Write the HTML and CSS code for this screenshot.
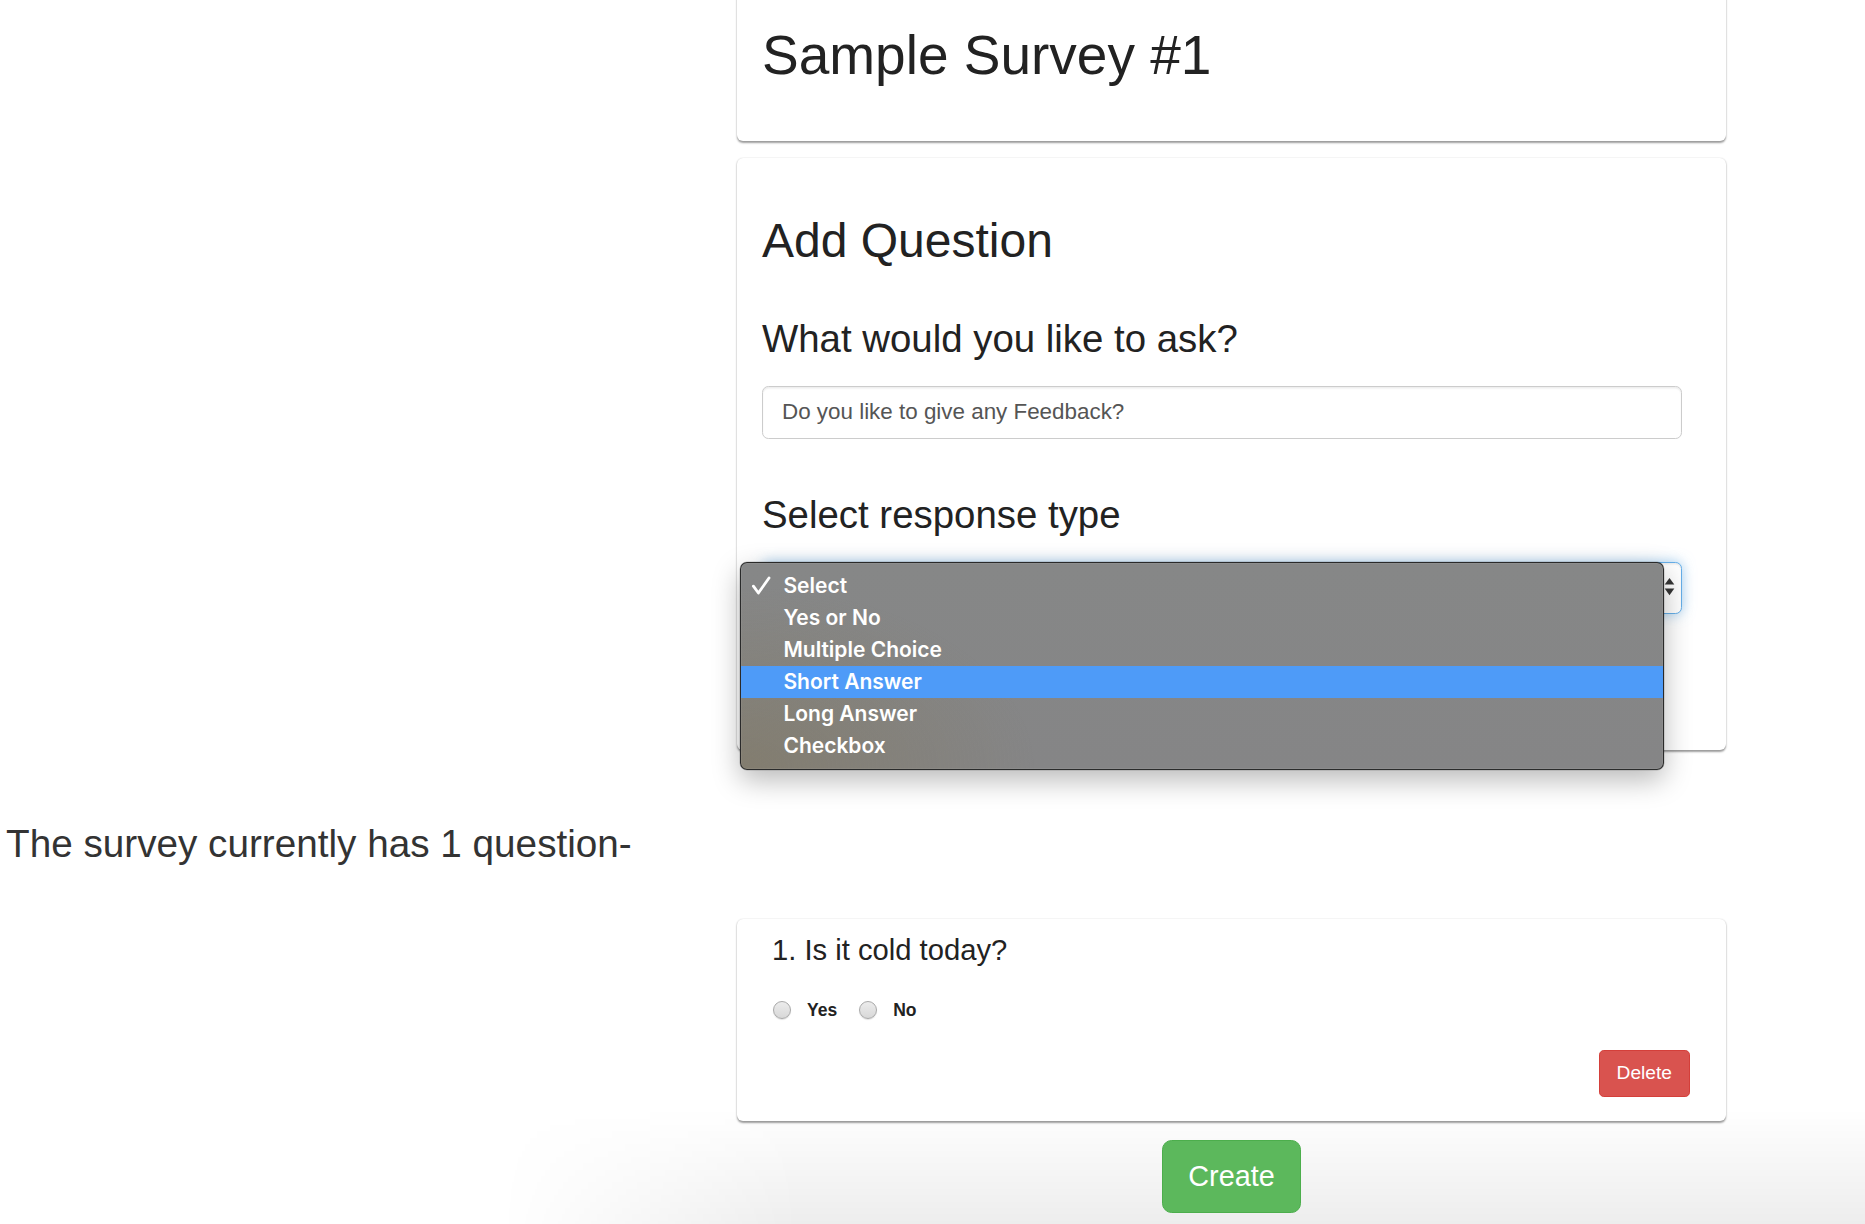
FILE: index.html
```html
<!DOCTYPE html>
<html lang="en">
<head>
<meta charset="utf-8">
<title>Sample Survey #1</title>
<link rel="stylesheet" href="styles.css">
</head>
<body>
<div class="page">
  <div class="col">
    <section class="card card-title">
      <h1>Sample Survey #1</h1>
    </section>
    <section class="card card-add">
      <h2>Add Question</h2>
      <h3 class="field-label">What would you like to ask?</h3>
      <input class="text-input" type="text" value="Do you like to give any Feedback?">
      <h3 class="field-label field-label-2">Select response type</h3>
      <div class="select-field">
        <svg class="select-arrows" width="11" height="20" viewBox="0 0 11 20">
          <path d="M5.5 1 L10.3 7.6 L0.7 7.6 Z" fill="#363636"/>
          <path d="M0.7 11.6 L10.3 11.6 L5.5 18.2 Z" fill="#363636"/>
        </svg>
        <div class="menu">
          <div class="menu-item"><span class="check"><svg width="21" height="19" viewBox="0 0 21 19"><path d="M2.4 10.2 L7.4 17 L18 2" fill="none" stroke="#fff" stroke-width="2.8" stroke-linecap="round" stroke-linejoin="round"/></svg></span>Select</div>
          <div class="menu-item"><span class="check"></span>Yes or No</div>
          <div class="menu-item"><span class="check"></span>Multiple Choice</div>
          <div class="menu-item active"><span class="check"></span>Short Answer</div>
          <div class="menu-item"><span class="check"></span>Long Answer</div>
          <div class="menu-item"><span class="check"></span>Checkbox</div>
        </div>
      </div>
    </section>
  </div>

  <p class="count">The survey currently has 1 question-</p>

  <div class="col">
    <section class="card card-q">
      <div class="q-title">1. Is it cold today?</div>
      <div class="radios">
        <span class="radio"></span><span class="radio-label">Yes</span>
        <span class="radio radio-2"></span><span class="radio-label">No</span>
      </div>
      <div class="q-actions">
        <button class="btn btn-danger" type="button">Delete</button>
      </div>
    </section>
    <div class="create-row">
      <button class="btn btn-create" type="button">Create</button>
    </div>
  </div>
</div>
</body>
</html>
```

FILE: styles.css
```css
* { box-sizing: border-box; }

html, body { margin: 0; padding: 0; }

body {
  font-family: "Liberation Sans", Arial, Helvetica, sans-serif;
  color: #333;
  background: #fff;
  min-height: 1224px;
  position: relative;
  overflow: hidden;
}

body::after {
  content: "";
  position: absolute;
  left: 500px;
  right: 0;
  bottom: 0;
  height: 115px;
  background: linear-gradient(to bottom, rgba(0,0,0,0), rgba(0,0,0,0.07));
  -webkit-mask-image: linear-gradient(to right, transparent, #000 300px);
  mask-image: linear-gradient(to right, transparent, #000 300px);
  z-index: -1;
}

.col {
  margin-left: 737px;
  width: 989px;
}

.card {
  background: #fff;
  border-radius: 6px;
  box-shadow: 0 1.5px 2px rgba(0,0,0,0.38), 0 0 1.5px rgba(0,0,0,0.1);
}

/* title card */
.card-title {
  margin-top: -20px;
  padding: 44.5px 25px 56px;
}
.card-title h1 {
  margin: 0;
  font-size: 55px;
  line-height: 1.1;
  font-weight: 400;
  color: #222;
}

/* add question card */
.card-add {
  margin-top: 17px;
  padding: 57px 44px 136px 25px;
}
.card-add h2 {
  margin: 0;
  font-size: 48px;
  line-height: 1.1;
  font-weight: 400;
  color: #222;
}
.field-label {
  margin: 50px 0 0;
  font-size: 38.4px;
  line-height: 1.1;
  font-weight: 400;
  color: #222;
}
.field-label-2 { margin-top: 55px; }

.text-input {
  display: block;
  margin-top: 25.6px;
  width: 100%;
  height: 53.6px;
  padding: 0 19px;
  font-family: "Liberation Sans", Arial, Helvetica, sans-serif;
  font-size: 22.4px;
  color: #555;
  background: #fff;
  border: 1.6px solid #ccc;
  border-radius: 6.4px;
  box-shadow: inset 0 1.6px 1.6px rgba(0,0,0,0.075);
  outline: none;
}

.select-field {
  position: relative;
  margin-top: 26px;
  height: 52px;
  border: 1.6px solid #66afe9;
  border-radius: 6.4px;
  background: #fff;
  box-shadow: inset 0 1.6px 1.6px rgba(0,0,0,0.075), 0 0 13px rgba(102,175,233,0.6);
  display: flex;
  align-items: center;
  justify-content: flex-end;
  padding-right: 6px;
}
.select-arrows { display: block; margin-top: -2px; }

/* open dropdown menu */
.menu {
  position: absolute;
  left: -22.6px;
  top: -1.6px;
  width: 924px;
  padding: 7px 0;
  border: 1px solid rgba(35,35,35,0.92);
  border-radius: 7px;
  background:
    radial-gradient(ellipse 420px 260px at 0% 100%, rgba(128,118,92,0.55), rgba(128,118,92,0) 70%),
    linear-gradient(180deg, #868787 0%, #858586 100%);
  box-shadow: 0 10px 28px rgba(0,0,0,0.28), 0 0 0 0.5px rgba(0,0,0,0.2), inset 0 0 0 1px rgba(255,255,255,0.06);
  font-family: Inter, "Liberation Sans", Arial, sans-serif;
  font-size: 21px;
  font-weight: 600;
  color: #fff;
  z-index: 10;
}
.menu-item {
  display: flex;
  align-items: center;
  height: 32px;
  line-height: 32px;
}
.menu-item.active { background: #4e9bf8; }
.check {
  width: 42px;
  padding-left: 10px;
  display: flex;
  align-items: center;
}
.check svg { display: block; }

/* count text */
.count {
  margin: 72.6px 0 0;
  padding-left: 6px;
  font-size: 38.7px;
  line-height: 1.1;
  color: #333;
}

/* question card */
.card-q {
  margin-top: 53.3px;
  padding: 15px 36px 24px 35px;
}
.q-title {
  font-size: 29.2px;
  line-height: 1.1;
  color: #222;
}
.radios {
  margin-top: 34px;
  height: 20px;
  display: flex;
  align-items: center;
}
.radio {
  width: 18px;
  height: 18px;
  margin-left: 1px;
  border-radius: 50%;
  border: 1px solid #a9a9a9;
  background: linear-gradient(180deg, #ececec, #d8d8d8);
  box-shadow: 0 1px 1px rgba(0,0,0,0.12);
}
.radio-2 { margin-left: 22px; }
.radio-label {
  margin-left: 16px;
  font-size: 17.5px;
  font-weight: 700;
  color: #222;
  line-height: 20px;
}
.q-actions {
  margin-top: 30px;
  display: flex;
  justify-content: flex-end;
}

.btn {
  font-family: "Liberation Sans", Arial, Helvetica, sans-serif;
  color: #fff;
  cursor: pointer;
}
.btn-danger {
  background: #d9534f;
  border: 1.6px solid #d43f3a;
  border-radius: 4.8px;
  font-size: 19.2px;
  line-height: 1.5;
  padding: 8px 17px;
}
.create-row {
  margin-top: 19px;
  display: flex;
  justify-content: center;
}
.btn-create {
  background: #5cb85c;
  border: 1.6px solid #4cae4c;
  border-radius: 9.6px;
  font-size: 28.8px;
  line-height: 1.3333;
  padding: 16.5px 25.6px;
}
```
